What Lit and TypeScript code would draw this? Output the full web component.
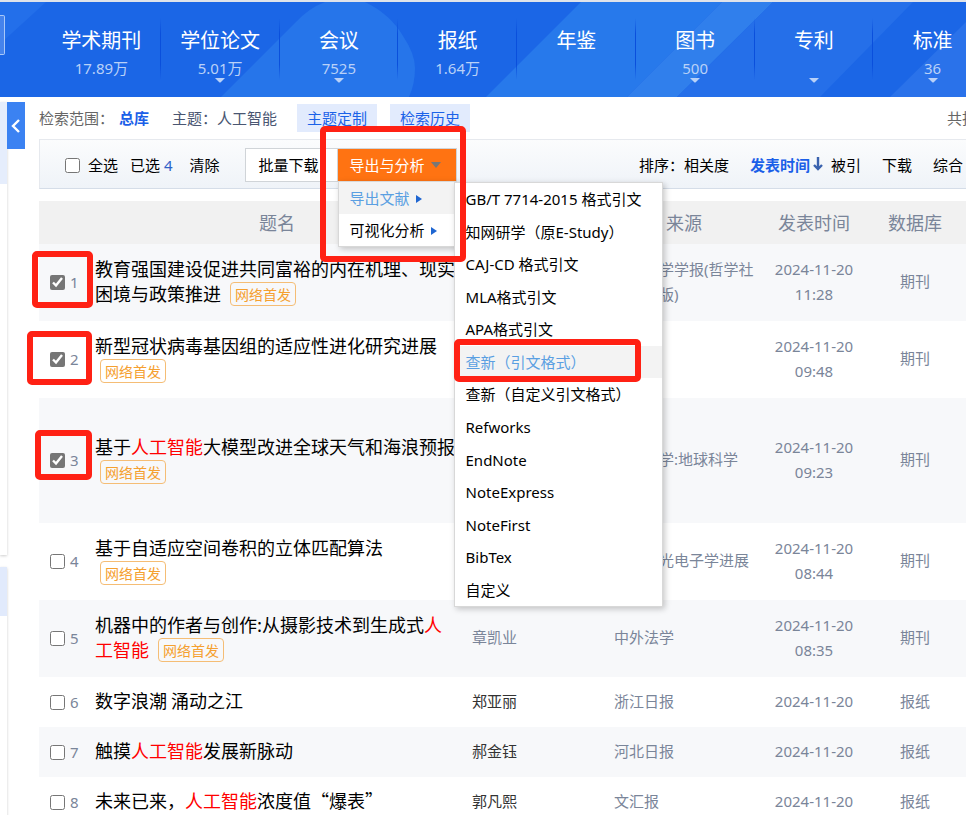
import { LitElement, html, css, nothing } from "lit";
import { customElement, property } from "lit/decorators.js";

interface Category {
  name: string;
  count: string;
  more: boolean;
}

interface Article {
  checked: boolean;
  title: string;
  online: boolean;
  author: string;
  plainAuthor?: boolean;
  source: string;
  date: string;
  kind: string;
  tall?: boolean;
  mark?: string;
}

const CATEGORIES: Category[] = [
  { name: "学术期刊", count: "17.89万", more: false },
  { name: "学位论文", count: "5.01万", more: true },
  { name: "会议", count: "7525", more: true },
  { name: "报纸", count: "1.64万", more: false },
  { name: "年鉴", count: "", more: false },
  { name: "图书", count: "500", more: true },
  { name: "专利", count: "", more: true },
  { name: "标准", count: "36", more: true },
];

const FORMATS = [
  "GB/T 7714-2015 格式引文",
  "知网研学（原E-Study）",
  "CAJ-CD 格式引文",
  "MLA格式引文",
  "APA格式引文",
  "查新（引文格式）",
  "查新（自定义引文格式）",
  "Refworks",
  "EndNote",
  "NoteExpress",
  "NoteFirst",
  "BibTex",
  "自定义",
];

const KEYWORD = "人工智能";

const ARTICLES: Article[] = [
  { checked: true, title: "教育强国建设促进共同富裕的内在机理、现实困境与政策推进", online: true, author: "", source: "东北大学学报(哲学社会科学版)", date: "2024-11-20 11:28", kind: "期刊", mark: "m1" },
  { checked: true, title: "新型冠状病毒基因组的适应性进化研究进展", online: true, author: "", source: "", date: "2024-11-20 09:48", kind: "期刊", mark: "m2" },
  { checked: true, title: "基于人工智能大模型改进全球天气和海浪预报", online: true, author: "", source: "中国科学:地球科学", date: "2024-11-20 09:23", kind: "期刊", tall: true, mark: "m3" },
  { checked: false, title: "基于自适应空间卷积的立体匹配算法", online: true, author: "", source: "激光与光电子学进展", date: "2024-11-20 08:44", kind: "期刊" },
  { checked: false, title: "机器中的作者与创作:从摄影技术到生成式人工智能", online: true, author: "章凯业", plainAuthor: true, source: "中外法学", date: "2024-11-20 08:35", kind: "期刊" },
  { checked: false, title: "数字浪潮 涌动之江", online: false, author: "郑亚丽", source: "浙江日报", date: "2024-11-20", kind: "报纸" },
  { checked: false, title: "触摸人工智能发展新脉动", online: false, author: "郝金钰", source: "河北日报", date: "2024-11-20", kind: "报纸" },
  { checked: false, title: "未来已来，人工智能浓度值“爆表”", online: false, author: "郭凡熙", source: "文汇报", date: "2024-11-20", kind: "报纸" },
];

const base = css`
  * {
    box-sizing: border-box;
  }
  a {
    color: inherit;
    text-decoration: none;
  }
  button {
    font: inherit;
    margin: 0;
    cursor: pointer;
  }
  input[type="checkbox"] {
    width: 15px;
    height: 15px;
    margin: 0;
    accent-color: #767676;
  }
  .mark {
    position: absolute;
    border: 6px solid #ff2114;
    border-radius: 5px;
    pointer-events: none;
  }
`;

@customElement("category-bar")
export class CategoryBar extends LitElement {
  static styles = [
    base,
    css`
      :host {
        display: block;
        position: relative;
        overflow: hidden;
        border-top: 2px solid #dfe3ea;
        height: 97px;
        background: #1b66e6;
      }
      .art {
        position: absolute;
        inset: 0;
        width: 100%;
        height: 100%;
      }
      .search-edge {
        position: absolute;
        left: 0;
        top: 13px;
        width: 5px;
        height: 40px;
        border: 1px solid #a9c8f8;
        border-left: 0;
        border-radius: 0 2px 2px 0;
        background: #4583ec;
      }
      .list {
        position: relative;
        display: grid;
        grid-template-columns: repeat(8, 1fr);
        margin: 0 -26px 0 42px;
      }
      .item {
        position: relative;
        display: flex;
        flex-direction: column;
        align-items: center;
        padding-top: 25px;
        height: 95px;
        color: #fff;
      }
      .item::after {
        content: "";
        position: absolute;
        right: 0;
        top: 16px;
        width: 1px;
        height: 62px;
        background: linear-gradient(transparent, #0a4fdc 25%, #0a4fdc 75%, transparent);
      }
      .name {
        font-size: 20px;
        line-height: 28px;
      }
      .count {
        margin-top: 4px;
        height: 19px;
        font-size: 15px;
        line-height: 19px;
        color: #b9d1f8;
      }
      .more {
        width: 10px;
        height: 5px;
        fill: #b9d1f8;
      }
    `,
  ];

  render() {
    return html`
      <svg class="art" viewBox="0 0 966 95" preserveAspectRatio="none" aria-hidden="true">
        <path d="M0 0H46L0 42Z" fill="#236fea" />
        <path d="M221 95L296 20Q309 6 325 0H365Q390 12 403 34Q415 52 415 66Q415 82 409 95Z" fill="#2675ea" />
        <path d="M486 95L581 0H722L627 95Z" fill="#2779eb" />
        <path d="M627 95L722 0H773L677 95Z" fill="#307fec" />
        <path d="M677 95L773 0H913L820 95Z" fill="#256fe9" />
        <path d="M890 95L966 20V95Z" fill="#2a72ea" />
      </svg>
      <span class="search-edge"></span>
      <nav class="list">
        ${CATEGORIES.map(
          (c) => html`<a class="item" href="#">
            <span class="name">${c.name}</span>
            <span class="count">${c.count}</span>
            ${c.more
              ? html`<svg class="more" viewBox="0 0 10 5"><path d="M0 0H10L6 4Q5 5 4 4Z" /></svg>`
              : nothing}
          </a>`,
        )}
      </nav>
    `;
  }
}

@customElement("export-menu")
export class ExportMenu extends LitElement {
  static styles = [
    base,
    css`
      :host {
        display: flex;
        position: relative;
        z-index: 2;
        height: 34px;
        border: 1px solid #d0d4d8;
        background: #fff;
      }
      .batch {
        width: 92px;
        padding: 0 0 0 13px;
        border: 0;
        border-right: 1px solid #d0d4d8;
        background: #fff;
        text-align: left;
        white-space: nowrap;
      }
      .export {
        display: flex;
        align-items: center;
        gap: 6px;
        width: 118px;
        padding: 0 0 0 12px;
        border: 0;
        background: #ff7312;
        color: #fff;
        white-space: nowrap;
      }
      .caret {
        width: 10px;
        height: 6px;
        fill: #777;
      }
      .menu,
      .formats {
        position: absolute;
        margin: 0;
        padding: 0;
        list-style: none;
        background: #fff;
        border: 1px solid #d8d8d8;
        box-shadow: 2px 2px 6px rgba(0, 0, 0, 0.22);
      }
      .menu {
        left: 92px;
        top: 32px;
        width: 119px;
      }
      .menu a {
        display: flex;
        align-items: center;
        gap: 6px;
        height: 32px;
        padding-left: 11px;
        white-space: nowrap;
      }
      .menu svg {
        width: 6px;
        height: 8px;
        margin-top: 2px;
        fill: #1f66d1;
      }
      .formats {
        display: grid;
        grid-auto-rows: 1fr;
        left: 208px;
        top: 33px;
        width: 209px;
        height: 425px;
      }
      .formats li {
        position: relative;
        display: grid;
      }
      .formats a {
        display: flex;
        align-items: center;
        padding-left: 11px;
        white-space: nowrap;
      }
      a.on {
        background: #f3f3f3;
        color: #5a9fe2;
      }
      .m-menu {
        left: 74px;
        top: -23px;
        width: 146px;
        height: 136px;
      }
      .m-format {
        left: -1px;
        top: -7px;
        width: 187px;
        height: 43px;
      }
    `,
  ];

  render() {
    const arrow = html`<svg viewBox="0 0 6 8"><path d="M0 0L6 4L0 8Z" /></svg>`;
    return html`
      <button class="batch" type="button">批量下载</button>
      <button class="export" type="button">
        导出与分析
        <svg class="caret" viewBox="0 0 10 6"><path d="M0 0H10L5 6Z" /></svg>
      </button>
      <ul class="menu">
        <li><a class="on" href="#">导出文献 ${arrow}</a></li>
        <li><a href="#">可视化分析 ${arrow}</a></li>
      </ul>
      <ul class="formats">
        ${FORMATS.map((f, i) =>
          i === 5
            ? html`<li><a class="on" href="#">${f}</a><span class="mark m-format"></span></li>`
            : html`<li><a href="#">${f}</a></li>`,
        )}
      </ul>
      <span class="mark m-menu"></span>
    `;
  }
}

@customElement("result-table")
export class ResultTable extends LitElement {
  @property({ attribute: false }) rows: Article[] = [];

  static styles = [
    base,
    css`
      :host {
        display: block;
        margin-top: 12px;
      }
      table {
        width: 100%;
        border-collapse: collapse;
        table-layout: fixed;
        color: #7a8599;
      }
      .c-pick {
        width: 56px;
      }
      .c-author {
        width: 145px;
      }
      .c-source {
        width: 160px;
      }
      .c-date {
        width: 100px;
      }
      .c-kind {
        width: 102px;
      }
      th {
        height: 43px;
        padding: 0;
        background: #f1f1f1;
        font-size: 18px;
        font-weight: 400;
      }
      td {
        height: 77px;
        padding: 0 0 2px;
        line-height: 25px;
        text-align: center;
      }
      .short td {
        height: 50px;
      }
      .tall td {
        height: 125px;
      }
      tbody tr:nth-child(odd) {
        background: #f7f8fa;
      }
      td.pick {
        position: relative;
        padding: 0;
      }
      .pick label {
        display: flex;
        align-items: center;
        gap: 5px;
        padding-left: 11px;
      }
      td.title {
        padding: 0 3px 3px 0;
        text-align: left;
        font-family: "Noto Sans CJK SC", sans-serif;
        font-size: 18px;
        color: #000;
      }
      .hit {
        color: #f00;
      }
      .online {
        margin-left: 5px;
        padding: 1px 4px;
        border: 1px solid #f5bd75;
        border-radius: 4px;
        font-size: 14px;
        line-height: 14px;
        vertical-align: 1px;
        white-space: nowrap;
        color: #f5a030;
      }
      td.author {
        padding-left: 13px;
        text-align: left;
        color: #333;
      }
      td.author.plain {
        color: #7a8599;
      }
      td.source {
        padding: 0 8px 2px 10px;
        text-align: left;
      }
      td.date {
        padding: 0 8px 2px;
      }
      .m1 {
        left: -7px;
        top: 7px;
        width: 61px;
        height: 57px;
      }
      .m2 {
        left: -12px;
        top: 10px;
        width: 65px;
        height: 54px;
      }
      .m3 {
        left: -4px;
        top: 32px;
        width: 57px;
        height: 50px;
      }
    `,
  ];

  private titleOf(text: string) {
    const [before, after] = text.split(KEYWORD);
    return after === undefined
      ? html`<a href="#">${before}</a>`
      : html`<a href="#">${before}<span class="hit">${KEYWORD}</span>${after}</a>`;
  }

  render() {
    return html`
      <table>
        <colgroup>
          <col class="c-pick" />
          <col />
          <col class="c-author" />
          <col class="c-source" />
          <col class="c-date" />
          <col class="c-kind" />
        </colgroup>
        <thead>
          <tr>
            <th></th>
            <th>题名</th>
            <th>作者</th>
            <th>来源</th>
            <th>发表时间</th>
            <th>数据库</th>
          </tr>
        </thead>
        <tbody>
          ${this.rows.map(
            (r, i) => html`<tr class=${r.tall ? "tall" : r.online ? "" : "short"}>
              <td class="pick">
                <label><input type="checkbox" .checked=${r.checked} />${i + 1}</label>
                ${r.mark ? html`<span class="mark ${r.mark}"></span>` : nothing}
              </td>
              <td class="title">
                ${this.titleOf(r.title)}
                ${r.online ? html`<span class="online">网络首发</span>` : nothing}
              </td>
              <td class="author ${r.plainAuthor ? "plain" : ""}">${r.author}</td>
              <td class="source">${r.source}</td>
              <td class="date">${r.date}</td>
              <td>${r.kind}</td>
            </tr>`,
          )}
        </tbody>
      </table>
    `;
  }
}

@customElement("app-root")
export class AppRoot extends LitElement {
  static styles = [
    base,
    css`
      :host {
        display: block;
        height: 100vh;
        overflow: hidden;
        background: #fff;
        color: #000;
        font-family: "Noto Sans", "Noto Sans CJK SC", sans-serif;
        font-size: 15px;
        line-height: 20px;
      }
      .page {
        display: flex;
      }
      .side {
        display: flex;
        flex-direction: column;
        gap: 12px;
        width: 7px;
        flex: none;
        padding-top: 5px;
      }
      .card {
        height: 453px;
        background: #fff;
        box-shadow: 0 1px 3px rgba(0, 0, 0, 0.2);
      }
      .card::before {
        content: "";
        display: block;
        height: 82px;
        background: #e5edfc;
      }
      .card + .card::before {
        height: 49px;
        background: #e1eafc;
      }
      .fold {
        flex: none;
        display: flex;
        align-items: center;
        justify-content: center;
        width: 18px;
        height: 47px;
        margin-top: 5px;
        padding: 0;
        border: 0;
        background: #3b82f2;
        z-index: 1;
      }
      .fold svg {
        width: 10px;
        height: 14px;
        fill: none;
        stroke: #fff;
        stroke-width: 2.4;
      }
      .main {
        flex: 1;
        min-width: 0;
        margin-left: 14px;
      }
      .scope {
        display: flex;
        align-items: center;
        height: 42px;
        white-space: nowrap;
        color: #666;
      }
      .scope b {
        margin: 0 23px 0 5px;
        color: #1b5fe8;
      }
      .topic {
        margin-right: 20px;
        color: #4a5672;
      }
      .chip {
        height: 28px;
        margin-right: 13px;
        padding: 0 10px;
        border: 0;
        background: #e2ebfd;
        color: #1b62e8;
      }
      .total {
        width: 19px;
        margin-left: auto;
      }
      .tools {
        display: flex;
        align-items: center;
        height: 50px;
        padding: 2px 3px 0 25px;
        border: 1px solid #e6e9ee;
        border-right: 0;
        border-bottom-color: #d5dde8;
        background: linear-gradient(#fbfcfd, #eff3f8);
        white-space: nowrap;
      }
      .all {
        display: flex;
        align-items: center;
        gap: 8px;
      }
      .picked {
        margin: 0 17px 0 12px;
      }
      .picked em {
        font-style: normal;
        color: #2f62c8;
      }
      .clear {
        margin-right: 25px;
        padding: 0;
        border: 0;
        background: none;
      }
      .sort {
        display: flex;
        gap: 21px;
        margin-left: auto;
      }
      .sort .active {
        position: relative;
        font-weight: 700;
        color: #1b5fe8;
      }
      .active svg {
        position: absolute;
        left: 100%;
        top: 2px;
        margin-left: 3px;
        width: 10px;
        height: 14px;
        fill: none;
        stroke: #3a62ae;
        stroke-width: 2.4;
      }
    `,
  ];

  render() {
    return html`
      <category-bar></category-bar>
      <div class="page" lang="zh-CN">
        <aside class="side">
          <div class="card"></div>
          <div class="card"></div>
        </aside>
        <button class="fold" type="button" aria-label="收起">
          <svg viewBox="0 0 10 14"><path d="M8 1L2 7L8 13" /></svg>
        </button>
        <main class="main">
          <div class="scope">
            <span>检索范围：</span><b>总库</b>
            <span class="topic">主题：人工智能</span>
            <button class="chip" type="button">主题定制</button>
            <button class="chip" type="button">检索历史</button>
            <span class="total">共找</span>
          </div>
          <div class="tools">
            <label class="all"><input type="checkbox" />全选</label>
            <span class="picked">已选 <em>4</em></span>
            <button class="clear" type="button">清除</button>
            <export-menu></export-menu>
            <div class="sort">
              <span>排序：<a href="#">相关度</a></span>
              <a class="active" href="#">发表时间<svg viewBox="0 0 10 14"><path d="M5 0V12M1 8L5 12L9 8" /></svg></a>
              <a href="#">被引</a>
              <a href="#">下载</a>
              <a href="#">综合</a>
            </div>
          </div>
          <result-table .rows=${ARTICLES}></result-table>
        </main>
      </div>
    `;
  }
}
